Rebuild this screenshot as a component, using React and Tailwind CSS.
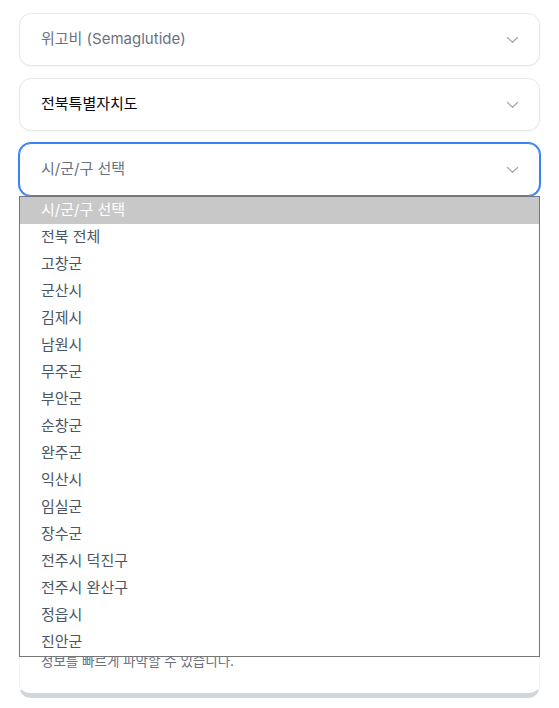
import React, { useState } from "react";

const regions = [
  "시/군/구 선택",
  "전북 전체",
  "고창군",
  "군산시",
  "김제시",
  "남원시",
  "무주군",
  "부안군",
  "순창군",
  "완주군",
  "익산시",
  "임실군",
  "장수군",
  "전주시 덕진구",
  "전주시 완산구",
  "정읍시",
  "진안군",
];

function Chevron() {
  return (
    <svg width="13" height="8" viewBox="0 0 13 8" fill="none" className="shrink-0">
      <path d="M1.5 1.5l5 4.8l5-4.8" stroke="#a1a6b0" strokeWidth="1.2" strokeLinecap="round" strokeLinejoin="round" />
    </svg>
  );
}

function SelectBox({ label, strong, focused, children }) {
  return (
    <div className="relative">
      <div
        className={
          focused
            ? "flex h-[53px] items-center justify-between rounded-xl border border-[#3b82f6] bg-white pl-[21px] pr-[20px] ring-1 ring-[#3b82f6]"
            : "flex h-[53px] items-center justify-between rounded-xl border border-gray-200 bg-white pl-[21px] pr-[20px] shadow-[0_1px_2px_rgba(0,0,0,0.04)]"
        }
      >
        <span
          className={
            strong
              ? "text-[15px] font-normal text-gray-950"
              : "text-[15px] text-gray-500"
          }
        >
          {label}
        </span>
        <Chevron />
      </div>
      {children}
    </div>
  );
}

export default function App() {
  const [active] = useState(0);

  return (
    <div
      className="min-h-screen bg-white px-[19px] pt-[13px]"
      style={{ fontFamily: "Inter, 'Noto Sans CJK KR', sans-serif" }}
    >
      <div className="flex flex-col gap-3">
        <SelectBox label="위고비 (Semaglutide)" />
        <SelectBox label="전북특별자치도" strong />
        <SelectBox label="시/군/구 선택" focused>
          {/* open native listbox */}
          <ul className="absolute left-0 right-0 top-full z-10 border border-[#767676] bg-white">
            {regions.map((name, index) => (
              <li
                key={index}
                className={
                  index === active
                    ? "flex h-[27px] items-center bg-[#c8c8c8] pl-[21px] text-[15px] text-white"
                    : "flex h-[27px] items-center pl-[21px] text-[15px] text-gray-600"
                }
              >
                {name}
              </li>
            ))}
          </ul>
        </SelectBox>

        <div className="flex h-[490px] flex-col justify-end rounded-xl border border-gray-100 border-b-[5px] border-b-gray-300 bg-white px-[21px] pb-[22px]">
          <p className="text-[13.5px] leading-5 text-gray-500">정보를 빠르게 파악할 수 있습니다.</p>
        </div>
      </div>
    </div>
  );
}
